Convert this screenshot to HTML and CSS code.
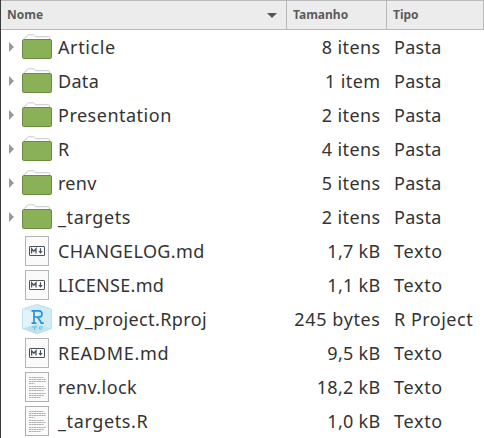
FILE: index.html
```html
<!DOCTYPE html>
<html lang="pt-BR">
<head>
<meta charset="utf-8">
<title>my_project</title>
<link rel="stylesheet" href="styles.css">
</head>
<body>
<svg class="defs" aria-hidden="true">
  <symbol id="folder" viewBox="0 0 30 26">
    <path d="M2.5 7V4.5Q2.5 3.5 3.5 3.5H4.2L5.2 1.6Q5.6.8 6.5.8H11.5Q12.3.8 12.7 1.6L13.2 2.7H26.5Q27.5 2.7 27.5 3.7V7" fill="#fff" stroke="#c8c8c8"/>
    <rect x=".5" y="5.5" width="29" height="19" rx="1.2" fill="#8ab058" stroke="#6b8b41"/>
  </symbol>
  <symbol id="markdown" viewBox="0 0 24 30">
    <rect x=".5" y=".5" width="23" height="29" fill="#fafafa" stroke="#b5b5b5"/>
    <rect x="4.5" y="10.5" width="15" height="9" rx=".4" fill="#fdfdfd" stroke="#495359"/>
    <path d="M6.6 17.5V12.8L8.8 15.3L11 12.8V17.5" fill="none" stroke="#495359" stroke-width="1.3"/>
    <path d="M15.5 12.2V17" stroke="#495359" stroke-width="1.2"/>
    <path d="M13.3 15H17.7L15.5 17.8Z" fill="#495359"/>
  </symbol>
  <symbol id="text" viewBox="0 0 24 30">
    <rect x=".5" y=".5" width="23" height="29" fill="#fafafa" stroke="#b0b0b0"/>
    <path d="M4 5.5H18.5M4 7.5H20.5M4 9.5H20.5M4 11.5H9.5M4 14.5H19M4 16.5H20.5M4 18.5H19M4 21.5H20.5M4 23.5H19M4 25.5H15.5" stroke="#b0b0b0" stroke-width="1" stroke-dasharray="2.2 .3"/>
  </symbol>
  <symbol id="rproj" viewBox="0 0 30 30">
    <path d="M15 .3L29.5 5V24.5L15 29.8L.5 24.5V5Z" fill="#e2f4fa"/>
    <path d="M15 .3L29.5 5L15 9.5L.5 5Z" fill="#cfebf4"/>
    <path d="M.5 24.5L15 20L29.5 24.5L15 29.8Z" fill="#b9e1ed"/>
    <path d="M15 9.5L29.5 5V24.5L15 29.8Z" fill="#c5e7f3" opacity=".6"/>
    <path d="M15 .3L29.5 5V24.5L15 29.8L.5 24.5V5Z" fill="none" stroke="#b4dae5" stroke-width=".7"/>
    <path d="M12 7V19M9.5 6.8H16.5Q20 6.8 20 9.9Q20 13 16.3 13H12M15.5 13L19.5 19M9.5 19.2H14.5M18.5 19.2H21.7" fill="none" stroke="#2590de" stroke-width="1.7"/>
    <path d="M10 23H15M12.5 23V26M21 23H17.5V25H20" fill="none" stroke="#69bce3" stroke-width="1"/>
  </symbol>
</svg>
<table class="files">
  <colgroup><col class="c-name"><col class="c-size"><col class="c-type"></colgroup>
  <thead>
    <tr>
      <th><div class="sort"><span>Nome</span><i class="down"></i></div></th>
      <th>Tamanho</th>
      <th>Tipo</th>
    </tr>
  </thead>
  <tbody>
    <tr><td><div class="entry"><i class="expand"></i><svg class="folder"><use href="#folder"/></svg><span class="t6">Article</span></div></td><td><span class="t4">8 itens</span></td><td><span class="t3">Pasta</span></td></tr>
    <tr><td><div class="entry"><i class="expand"></i><svg class="folder"><use href="#folder"/></svg><span class="t3">Data</span></div></td><td><span class="t4">1 item</span></td><td><span class="t3">Pasta</span></td></tr>
    <tr><td><div class="entry"><i class="expand"></i><svg class="folder"><use href="#folder"/></svg><span class="t5">Presentation</span></div></td><td><span class="t4">2 itens</span></td><td><span class="t3">Pasta</span></td></tr>
    <tr><td><div class="entry"><i class="expand"></i><svg class="folder"><use href="#folder"/></svg><span>R</span></div></td><td><span class="t4">4 itens</span></td><td><span class="t3">Pasta</span></td></tr>
    <tr><td><div class="entry"><i class="expand"></i><svg class="folder"><use href="#folder"/></svg><span class="t3">renv</span></div></td><td><span class="t4">5 itens</span></td><td><span class="t3">Pasta</span></td></tr>
    <tr><td><div class="entry"><i class="expand"></i><svg class="folder"><use href="#folder"/></svg><span class="t6">_targets</span></div></td><td><span class="t4">2 itens</span></td><td><span class="t3">Pasta</span></td></tr>
    <tr><td><div class="entry"><svg class="page"><use href="#markdown"/></svg><span class="t4">CHANGELOG.md</span></div></td><td><span class="t3">1,7 kB</span></td><td><span class="t7">Texto</span></td></tr>
    <tr><td><div class="entry"><svg class="page"><use href="#markdown"/></svg><span class="t3">LICENSE.md</span></div></td><td><span class="t3">1,1 kB</span></td><td><span class="t7">Texto</span></td></tr>
    <tr><td><div class="entry"><svg class="cube"><use href="#rproj"/></svg><span class="t4">my_project.Rproj</span></div></td><td><span class="t6">245 bytes</span></td><td><span class="t5">R Project</span></td></tr>
    <tr><td><div class="entry"><svg class="page"><use href="#markdown"/></svg><span class="t7">README.md</span></div></td><td><span class="t3">9,5 kB</span></td><td><span class="t7">Texto</span></td></tr>
    <tr><td><div class="entry"><svg class="page"><use href="#text"/></svg><span class="t4">renv.lock</span></div></td><td><span class="t3">18,2 kB</span></td><td><span class="t7">Texto</span></td></tr>
    <tr><td><div class="entry"><svg class="page"><use href="#text"/></svg><span class="t6">_targets.R</span></div></td><td><span class="t3">1,0 kB</span></td><td><span class="t7">Texto</span></td></tr>
  </tbody>
</table>
</body>
</html>
```
FILE: styles.css
```css
* { box-sizing: border-box; }
body {
  margin: 0;
  background: #fff;
  color: #333;
  border-left: 1px solid #3c3c3c;
  font: 18px/34px "Noto Sans", sans-serif;
}
.defs { display: none; }
.files {
  width: 483px;
  table-layout: fixed;
  border-collapse: separate;
  border-spacing: 0;
}
.c-name { width: 286px; }
.c-size { width: 100px; }
.c-type { width: 97px; }
th {
  height: 30px;
  padding: 0 6px;
  background: #ececec;
  border: solid #b9b9b9;
  border-width: 1px 1px 1px 0;
  color: #5c5c5c;
  font-size: 12px;
  line-height: 28px;
  font-weight: 700;
  text-align: left;
}
.sort { display: flex; align-items: center; justify-content: space-between; height: 28px; }
.down {
  margin-right: 3px;
  border: solid transparent;
  border-width: 5px 5px 0;
  border-top-color: #555;
}
td { height: 34px; padding: 0; white-space: nowrap; }
td:nth-child(2) { text-align: right; padding-right: 6.5px; }
td:nth-child(3) { padding-left: 7px; }
.entry { display: flex; align-items: center; height: 34px; }
.expand {
  width: 5px;
  margin: 0 -13px 0 8px;
  border: solid transparent;
  border-width: 5px 0 5px 5px;
  border-left-color: #999;
}
.entry svg { flex: none; }
.folder { width: 30px; height: 26px; margin: 0 6px 0 21px; }
.page { width: 24px; height: 30px; margin: 0 9px 0 24px; }
.cube { width: 30px; height: 30px; margin: 0 6px 0 21px; }

/* Tracking steps, in tenths of a pixel */
.t3 { letter-spacing: .3px; }
.t4 { letter-spacing: .4px; }
.t5 { letter-spacing: .5px; }
.t6 { letter-spacing: .6px; }
.t7 { letter-spacing: .7px; }
```
